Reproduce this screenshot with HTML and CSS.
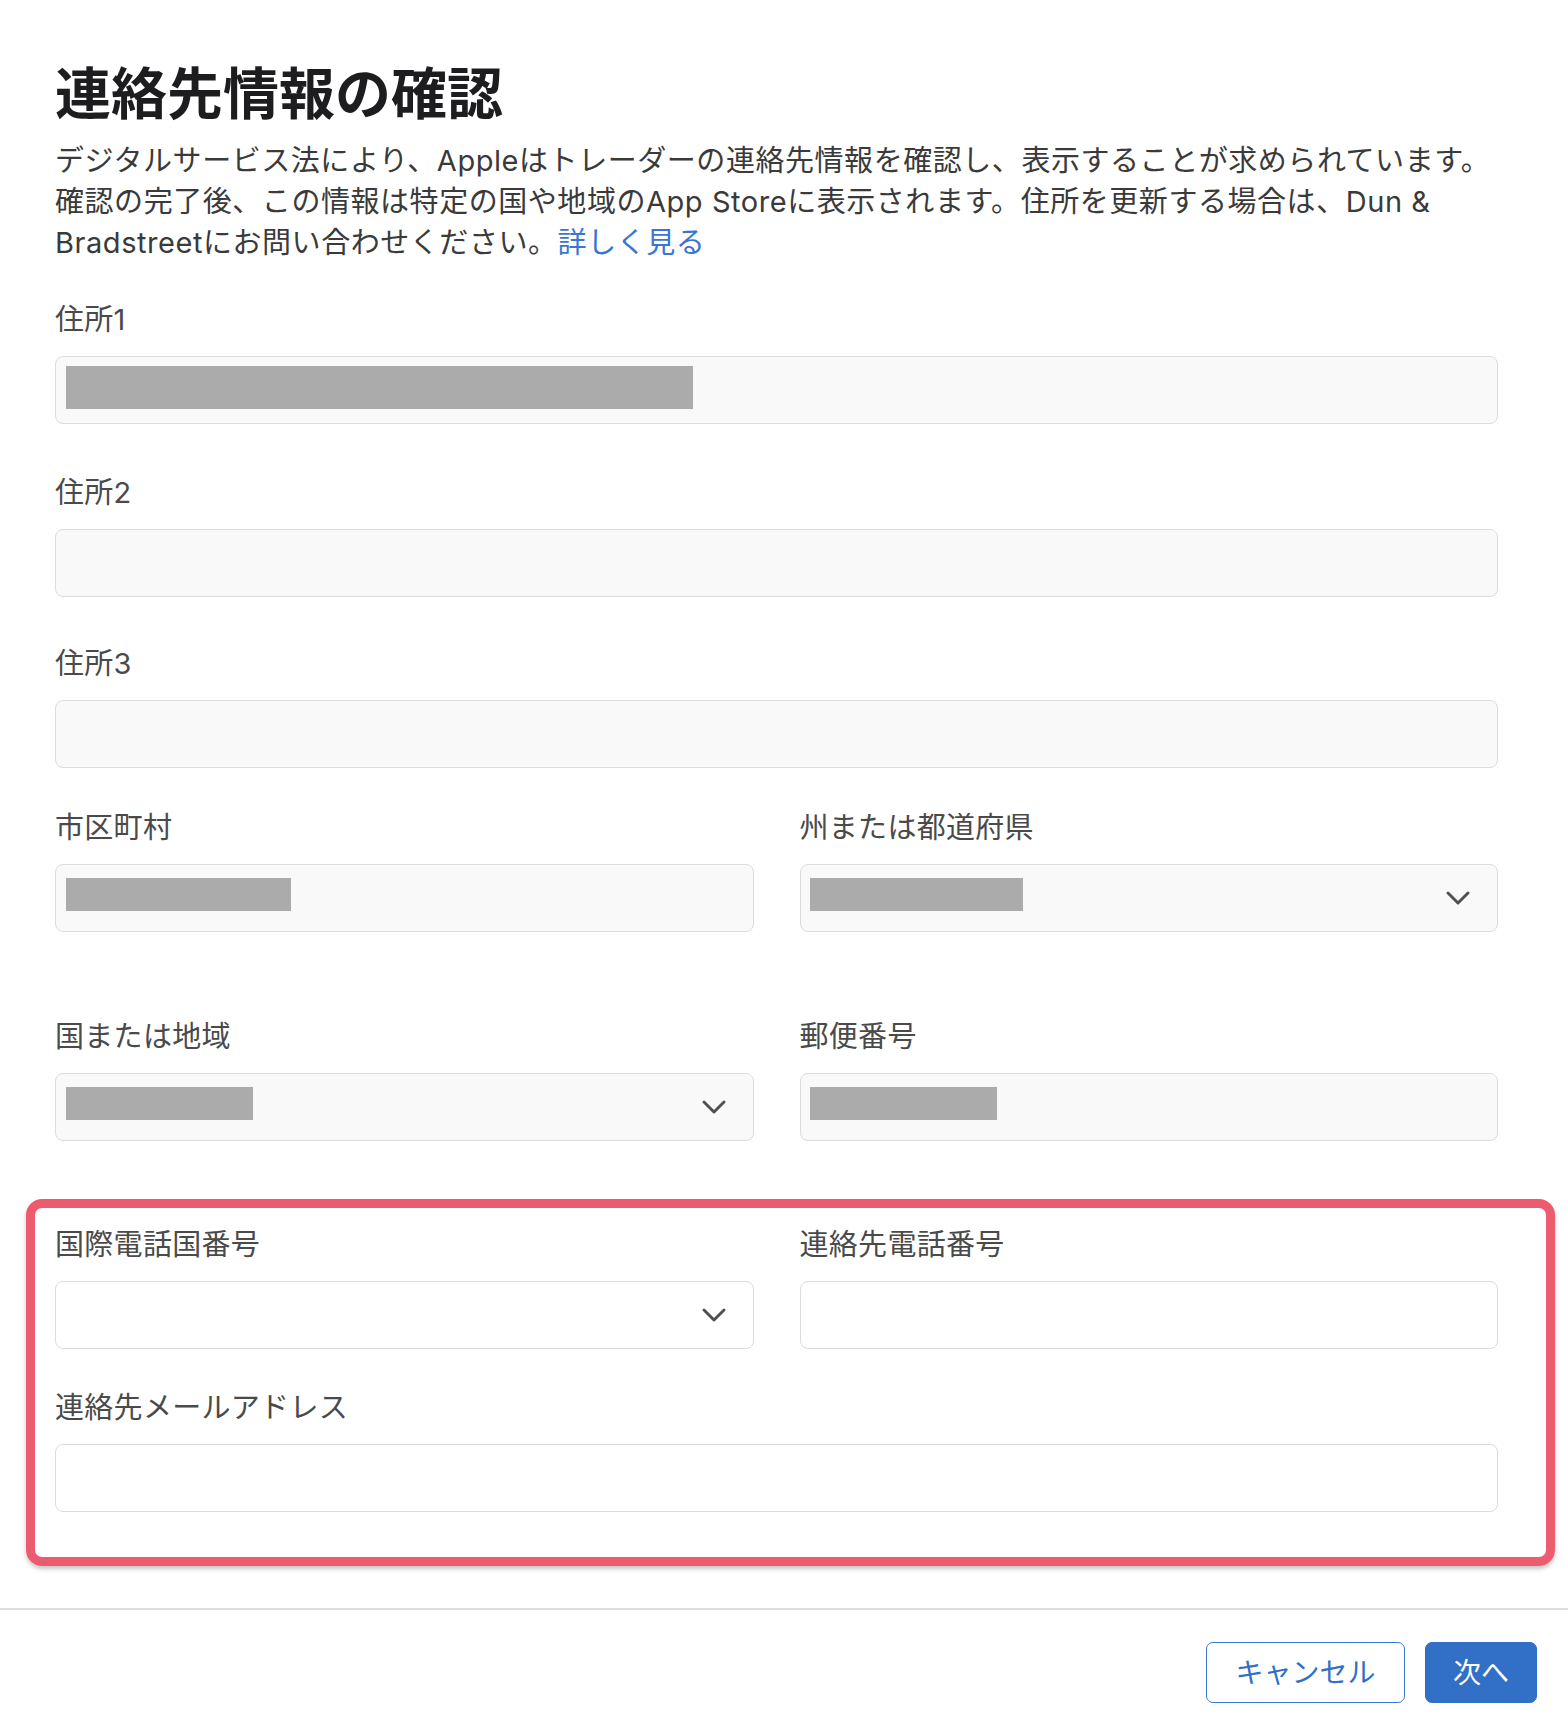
FILE: index.html
```html
<!DOCTYPE html>
<html lang="ja">
<head>
<meta charset="utf-8">
<title>連絡先情報の確認</title>
<link rel="stylesheet" href="styles.css">
</head>
<body>
<div class="page">
  <header class="intro">
    <h1 class="title">連絡先情報の確認</h1>
    <p class="lead">デジタルサービス法により、Appleはトレーダーの連絡先情報を確認し、表示することが求められています。<br>確認の完了後、この情報は特定の国や地域のApp Storeに表示されます。住所を更新する場合は、Dun &amp;<br>Bradstreetにお問い合わせください。<a class="link" href="#">詳しく見る</a></p>
  </header>

  <form class="form">
    <div class="field field-1">
      <label class="label">住所1</label>
      <div class="box"><span class="redact redact-lg" style="width:627px"></span></div>
    </div>
    <div class="field field-2">
      <label class="label">住所2</label>
      <div class="box"></div>
    </div>
    <div class="field field-3">
      <label class="label">住所3</label>
      <div class="box"></div>
    </div>

    <div class="row row-wide">
      <div class="field">
        <label class="label">市区町村</label>
        <div class="box"><span class="redact" style="width:225px"></span></div>
      </div>
      <div class="field">
        <label class="label">州または都道府県</label>
        <div class="box select"><span class="redact" style="width:213px"></span>
          <svg class="chev" viewBox="0 0 24 14" width="24" height="14"><polyline points="2,2 12,12 22,2"/></svg>
        </div>
      </div>
    </div>

    <div class="row row-last">
      <div class="field">
        <label class="label">国または地域</label>
        <div class="box select"><span class="redact" style="width:187px"></span>
          <svg class="chev" viewBox="0 0 24 14" width="24" height="14"><polyline points="2,2 12,12 22,2"/></svg>
        </div>
      </div>
      <div class="field">
        <label class="label">郵便番号</label>
        <div class="box"><span class="redact" style="width:187px"></span></div>
      </div>
    </div>

    <section class="highlight">
      <div class="row row-inner">
        <div class="field">
          <label class="label">国際電話国番号</label>
          <div class="box box-white select"><span></span>
            <svg class="chev" viewBox="0 0 24 14" width="24" height="14"><polyline points="2,2 12,12 22,2"/></svg>
          </div>
        </div>
        <div class="field">
          <label class="label">連絡先電話番号</label>
          <div class="box box-white"></div>
        </div>
      </div>
      <div class="field field-end">
        <label class="label">連絡先メールアドレス</label>
        <div class="box box-white"></div>
      </div>
    </section>
  </form>
</div>

<footer class="footer">
  <div class="actions">
    <button class="btn btn-secondary" type="button">キャンセル</button>
    <button class="btn btn-primary" type="button">次へ</button>
  </div>
</footer>
</body>
</html>
```

FILE: styles.css
```css
* { box-sizing: border-box; }

html, body {
  margin: 0;
  padding: 0;
  background: #ffffff;
}

body {
  font-family: "Inter", "Noto Sans CJK JP", sans-serif;
  color: #3a3a3a;
}

.page {
  padding: 56px 31px 0 55px;
}

.title {
  margin: 0 0 17px 0;
  font-family: "Noto Sans CJK JP", sans-serif;
  font-size: 56px;
  line-height: 67px;
  font-weight: 700;
  color: #1d1d1f;
}

.lead {
  margin: 0 0 37px 0;
  font-size: 29px;
  line-height: 41px;
  letter-spacing: 0.55px;
  color: #3a3a3a;
}

.link {
  color: #3a76d0;
  text-decoration: none;
}

.form {
  width: 1443px;
  display: flex;
  flex-direction: column;
}

.field {
  display: flex;
  flex-direction: column;
  margin-bottom: 45px;
}

.field-1 { margin-bottom: 49px; }
.field-2 { margin-bottom: 47px; }
.field-3 { margin-bottom: 40px; }

.row {
  display: grid;
  grid-template-columns: 1fr 1fr;
  column-gap: 46px;
}

.row-wide .field { margin-bottom: 85px; }
.row-last .field { margin-bottom: 58px; }
.row-inner .field { margin-bottom: 39px; }

.label {
  font-size: 29px;
  line-height: 40px;
  height: 40px;
  margin-bottom: 16px;
  letter-spacing: 0.3px;
  color: #4a4a4a;
}

.box {
  height: 68px;
  border: 1.5px solid #dcdcdc;
  border-radius: 8px;
  background: #f9f9f9;
  display: flex;
  align-items: center;
  padding: 0 9.5px;
}

.box-white { background: #ffffff; }

.select {
  justify-content: space-between;
  padding-right: 27px;
}

.redact {
  display: block;
  height: 33px;
  margin-bottom: 8px;
  background: #aaabaa;
}

.redact-lg {
  height: 43px;
  margin-bottom: 6px;
}

.chev {
  display: block;
  fill: none;
  stroke: #505050;
  stroke-width: 2.9;
  stroke-linecap: round;
  stroke-linejoin: round;
}

.highlight {
  margin: 0 -57px 0 -29px;
  padding: 17px 48px 0 20px;
  border: 9px solid #ec5b6e;
  border-radius: 16px;
  box-shadow: 0 3px 4px rgba(0, 0, 0, 0.22);
}

.field-end { margin-bottom: 45px; }

.footer {
  margin-top: 42px;
  border-top: 2px solid #dedede;
  padding: 32px 31px 0 0;
}

.actions {
  display: flex;
  justify-content: flex-end;
  gap: 20px;
}

.btn {
  height: 61px;
  border-radius: 7px;
  font-family: "Noto Sans CJK JP", sans-serif;
  font-size: 28px;
  line-height: 1;
  padding: 0 0 3px 0;
  cursor: pointer;
}

.btn-secondary {
  width: 199px;
  background: #ffffff;
  border: 1.5px solid #3a78d0;
  color: #3170c6;
}

.btn-primary {
  width: 112px;
  background: #3170c6;
  border: 1.5px solid #3170c6;
  color: #ffffff;
}
```
